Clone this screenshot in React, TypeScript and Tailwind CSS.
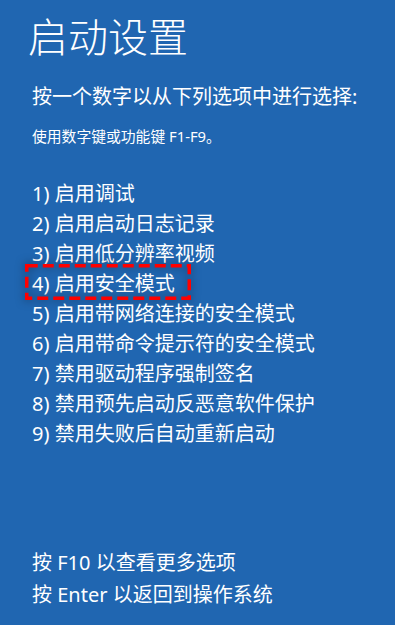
const OPTIONS = [
  "1) 启用调试",
  "2) 启用启动日志记录",
  "3) 启用低分辨率视频",
  "4) 启用安全模式",
  "5) 启用带网络连接的安全模式",
  "6) 启用带命令提示符的安全模式",
  "7) 禁用驱动程序强制签名",
  "8) 禁用预先启动反恶意软件保护",
  "9) 禁用失败后自动重新启动",
];

const FONT = { fontFamily: '"Noto Sans", "Noto Sans CJK SC", sans-serif' };

export default function App() {
  return (
    <div
      style={FONT}
      className="flex min-h-screen w-full flex-col bg-[#2066b1] pl-[32px] pb-[14px] text-white"
    >
      <h1 className="-ml-[4px] mt-[13px] text-[40px] leading-[48px] font-light">启动设置</h1>

      <p className="mt-[23px] text-[20px] leading-[26px]">按一个数字以从下列选项中进行选择:</p>
      <p className="mt-[15px] text-[14.8px] leading-[22px]">使用数字键或功能键 F1-F9。</p>

      <ul className="mt-[32px] flex flex-col">
        {OPTIONS.map((label, i) => (
          <li key={label} className="relative text-[20px] leading-[30px]">
            {label}
            {i === 3 && (
              <svg
                className="pointer-events-none absolute -left-[7px] -top-[5px] h-[36px] w-[166px] overflow-visible"
                style={{ filter: "drop-shadow(0 0 5px rgba(0,0,0,0.5))" }}
              >
                <rect
                  x="1.75"
                  y="1.75"
                  width="162.5"
                  height="32.5"
                  fill="none"
                  stroke="#ff0000"
                  strokeWidth="3.5"
                  strokeDasharray="11 5"
                />
              </svg>
            )}
          </li>
        ))}
      </ul>

      <div className="mt-auto flex flex-col">
        <p className="text-[20px] leading-[32px]">按 F10 以查看更多选项</p>
        <p className="text-[20px] leading-[32px]">按 Enter 以返回到操作系统</p>
      </div>
    </div>
  );
}
